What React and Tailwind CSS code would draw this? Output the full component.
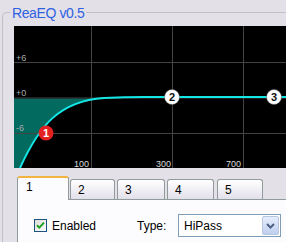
import React from 'react';

const tabs = [
  { label: '1', active: true, cls: 'w-[52px]' },
  { label: '2', cls: 'w-[45px] ml-[1px]' },
  { label: '3', cls: 'w-[48px] ml-[2px]' },
  { label: '4', cls: 'w-[47px] ml-[2px]' },
  { label: '5', cls: 'w-[46px] ml-[3px]' },
];

function Graph() {
  const grid = '#434343';
  const font = 'Liberation Sans, Arial, sans-serif';
  return (
    <svg width="272" height="142" viewBox="0 0 272 142" className="block bg-black">
      {/* teal area under 0 dB */}
      <path d="M0 72.5 L90 72.5 C45 75 25 100 6 142 L0 142 Z" fill="#036a60" />
      {/* grid */}
      <line x1="0" y1="36.5" x2="272" y2="36.5" stroke={grid} />
      <line x1="0" y1="72" x2="272" y2="72" stroke={grid} />
      <line x1="0" y1="107.5" x2="272" y2="107.5" stroke={grid} />
      <line x1="77.5" y1="0" x2="77.5" y2="142" stroke={grid} />
      <line x1="158.5" y1="0" x2="158.5" y2="142" stroke={grid} />
      <line x1="229.5" y1="0" x2="229.5" y2="142" stroke={grid} />
      {/* db labels */}
      <g fill="#a8a8a8" fontFamily={font} fontSize="9">
        <text x="2" y="35">+6</text>
        <text x="2" y="70">+0</text>
        <text x="2" y="105">-6</text>
      </g>
      <g fill="#dcdcdc" fontFamily={font} fontSize="9" textAnchor="end">
        <text x="75" y="141">100</text>
        <text x="157" y="141">300</text>
        <text x="227" y="141">700</text>
      </g>
      {/* response curve */}
      <path
        d="M6 142 C25 100 45 75 90 72 C110 71 120 71 130 71 L272 71"
        fill="none"
        stroke="#14e6e6"
        strokeWidth="2"
      />
      {/* band handles */}
      <circle cx="32" cy="107" r="7.5" fill="#e3201f" />
      <text x="32" y="111" textAnchor="middle" fill="#fff" fontFamily={font} fontSize="11" fontWeight="bold">1</text>
      <circle cx="158" cy="71" r="7.5" fill="#fff" stroke="#555" strokeWidth="0.5" />
      <text x="158" y="75" textAnchor="middle" fill="#111" fontFamily={font} fontSize="11" fontWeight="bold">2</text>
      <circle cx="260" cy="71" r="7.5" fill="#fff" stroke="#555" strokeWidth="0.5" />
      <text x="260" y="75" textAnchor="middle" fill="#111" fontFamily={font} fontSize="11" fontWeight="bold">3</text>
    </svg>
  );
}

export default function App() {
  return (
    <div className="w-[286px] h-[242px] overflow-hidden bg-[#e4e0e7] pt-[12px] pl-[2px] font-['Liberation_Sans',Arial,sans-serif] text-[12px] text-black">
      <div className="h-[240px] border-l border-t border-[#c3bfc7] rounded-tl-[5px]">
        <div className="-mt-[7px] ml-[7px] w-fit px-[2px] bg-[#e4e0e7] text-[14px] leading-[14px] tracking-[-0.4px] text-[#2d62e3]">
          ReaEQ v0.5
        </div>

        <div className="ml-[11px] mt-[6px]">
          <Graph />
        </div>

        <div className="ml-[14px] mt-[8px] w-[300px]">
          <div className="flex items-end">
            {tabs.map((t) =>
              t.active ? (
                <div
                  key={t.label}
                  className={`relative z-10 -mb-[1px] h-[24px] ${t.cls} rounded-t-[3px] border-x border-[#919b9c] border-t-2 border-t-[#f2b441] bg-[#fcfcfe] pl-[8px] pt-[2px] leading-[14px]`}
                >
                  {t.label}
                </div>
              ) : (
                <div
                  key={t.label}
                  className={`h-[20px] ${t.cls} rounded-t-[3px] border-x border-t border-[#919b9c] bg-gradient-to-b from-white to-[#e2e0ea] pl-[7px] pt-[3px] leading-[14px]`}
                >
                  {t.label}
                </div>
              )
            )}
          </div>

          <div className="h-[60px] border-l border-t border-[#919b9c] bg-[#fcfcfe] pt-[14px]">
            <div className="flex items-center h-[23px]">
              <div className="ml-[16px] w-[13px] h-[13px] border border-[#1c5180] bg-gradient-to-br from-[#dcdcd7] to-white flex items-center justify-center">
                <svg width="11" height="11" viewBox="0 0 11 11">
                  <path d="M2 5.2 L4.3 7.6 L9 2.6" fill="none" stroke="#21a121" strokeWidth="2" />
                </svg>
              </div>
              <span className="ml-[5px] w-[85px]">Enabled</span>
              <span className="w-[41px]">Type:</span>
              <div className="w-[103px] h-[23px] border border-[#7f9db9] bg-white flex items-center justify-between pl-[5px] pr-[1px]">
                <span>HiPass</span>
                <div className="w-[17px] h-[19px] rounded-[2px] border border-[#b8c6e0] bg-gradient-to-b from-[#e6eefc] to-[#c0cfef] flex items-center justify-center">
                  <svg width="9" height="6" viewBox="0 0 9 6">
                    <path d="M1 1 L4.5 4.5 L8 1" fill="none" stroke="#4d6185" strokeWidth="2" />
                  </svg>
                </div>
              </div>
            </div>
          </div>
        </div>
      </div>
    </div>
  );
}
